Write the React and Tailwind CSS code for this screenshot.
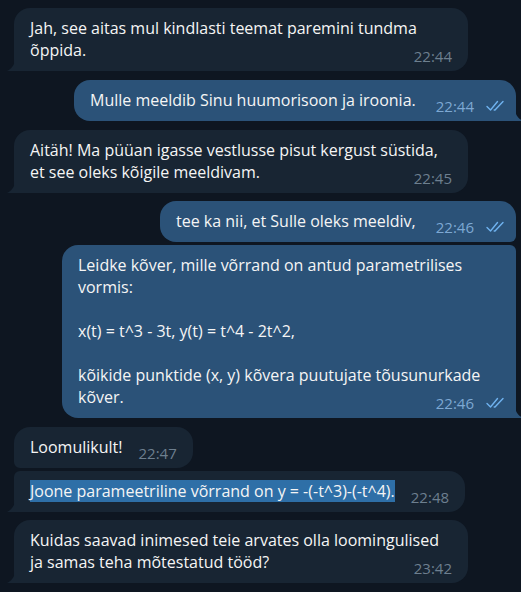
import React from "react";

const messages = [
  { id: 1, out: false, tail: true, corners: "rounded-tl-[16px] rounded-tr-[16px] rounded-br-[16px] rounded-bl-none", text: "Jah, see aitas mul kindlasti teemat paremini tundma õppida.", time: "22:44", mt: "mt-0" },
  { id: 2, out: true, tail: true, corners: "rounded-tl-[16px] rounded-tr-[16px] rounded-bl-[16px] rounded-br-none", text: "Mulle meeldib Sinu huumorisoon ja iroonia.", time: "22:44", mt: "mt-[9px]" },
  { id: 3, out: false, tail: true, corners: "rounded-tl-[16px] rounded-tr-[16px] rounded-br-[16px] rounded-bl-none", text: "Aitäh! Ma püüan igasse vestlusse pisut kergust süstida, et see oleks kõigile meeldivam.", time: "22:45", mt: "mt-[9px]" },
  { id: 4, out: true, tail: false, corners: "rounded-tl-[16px] rounded-tr-[16px] rounded-bl-[16px] rounded-br-[6px]", text: "tee ka nii, et Sulle oleks meeldiv,", time: "22:46", mt: "mt-[8px]" },
  {
    id: 5,
    out: true,
    tail: true,
    corners: "rounded-tl-[16px] rounded-tr-[6px] rounded-bl-[16px] rounded-br-none",
    text: "Leidke kõver, mille võrrand on antud parametrilises vormis:\n\nx(t) = t^3 - 3t, y(t) = t^4 - 2t^2,\n\nkõikide punktide (x, y) kõvera puutujate tõusunurkade kõver.",
    time: "22:46",
    mt: "mt-[3px]",
  },
  { id: 6, out: false, tail: false, corners: "rounded-tl-[16px] rounded-tr-[16px] rounded-br-[16px] rounded-bl-[6px]", text: "Loomulikult!", time: "22:47", mt: "mt-[9px]" },
  { id: 7, out: false, tail: true, corners: "rounded-tl-[6px] rounded-tr-[16px] rounded-br-[16px] rounded-bl-none", text: "Joone parameetriline võrrand on y = -(-t^3)-(-t^4).", time: "22:48", mt: "mt-[3px]", selected: true },
  { id: 8, out: false, tail: true, corners: "rounded-tl-[16px] rounded-tr-[16px] rounded-br-[16px] rounded-bl-none", text: "Kuidas saavad inimesed teie arvates olla loomingulised ja samas teha mõtestatud tööd?", time: "23:42", mt: "mt-[8px]" },
];

function DoubleCheck() {
  return (
    <svg width="19" height="12" viewBox="0 0 19 12" fill="none" className="inline-block">
      <path d="M1 6.5 L4.5 10 L11.5 1.5" stroke="#6fb2ef" strokeWidth="1.4" strokeLinecap="round" strokeLinejoin="round" />
      <path d="M8.2 10 L9 10 L17 1.5" stroke="#6fb2ef" strokeWidth="1.4" strokeLinecap="round" strokeLinejoin="round" />
    </svg>
  );
}

function Tail({ out, color }) {
  if (out) {
    return (
      <svg width="8" height="12" viewBox="0 0 8 12" className="absolute bottom-0 right-[-7px]">
        <path d="M0 0 C0 6 4 10 8 12 H0 Z" fill={color} />
      </svg>
    );
  }
  return (
    <svg width="8" height="12" viewBox="0 0 8 12" className="absolute bottom-0 left-[-7px]">
      <path d="M8 0 C8 6 4 10 0 12 H8 Z" fill={color} />
    </svg>
  );
}

function Bubble({ msg }) {
  const bg = msg.out ? "bg-[#2b5278]" : "bg-[#182533]";
  return (
    <div className={`flex ${msg.out ? "justify-end pr-[5px]" : "justify-start pl-[14px]"} ${msg.mt}`}>
      <div
        className={`relative max-w-[454px] ${bg} ${msg.corners} pt-[9px] pb-[10px] pl-4 ${
          msg.out ? "pr-[11px]" : "pr-4"
        } text-[16px] leading-[22px] text-[#f5f5f5] flow-root`}
      >
        <span className="whitespace-pre-wrap">
          {msg.selected ? (
            <span className="bg-[#2e6fa7] inline-block leading-[22px]">{msg.text}</span>
          ) : (
            msg.text
          )}
        </span>
        <span
          className={`float-right relative top-[6px] ${msg.out ? "ml-5" : "ml-4"} flex items-center gap-3 text-[15px] leading-[22px] ${
            msg.out ? "text-[#7da8d3]" : "text-[#6d7f8f]"
          }`}
        >
          {msg.time}
          {msg.out && <DoubleCheck />}
        </span>
        {msg.tail && <Tail out={msg.out} color={msg.out ? "#2b5278" : "#182533"} />}
      </div>
    </div>
  );
}

export default function App() {
  return (
    <div className="min-h-screen w-full overflow-hidden bg-[#0e1621] pt-2 pb-2 font-['Open_Sans',sans-serif]">
      <div className="flex flex-col">
        {messages.map((msg) => (
          <Bubble key={msg.id} msg={msg} />
        ))}
      </div>
    </div>
  );
}
